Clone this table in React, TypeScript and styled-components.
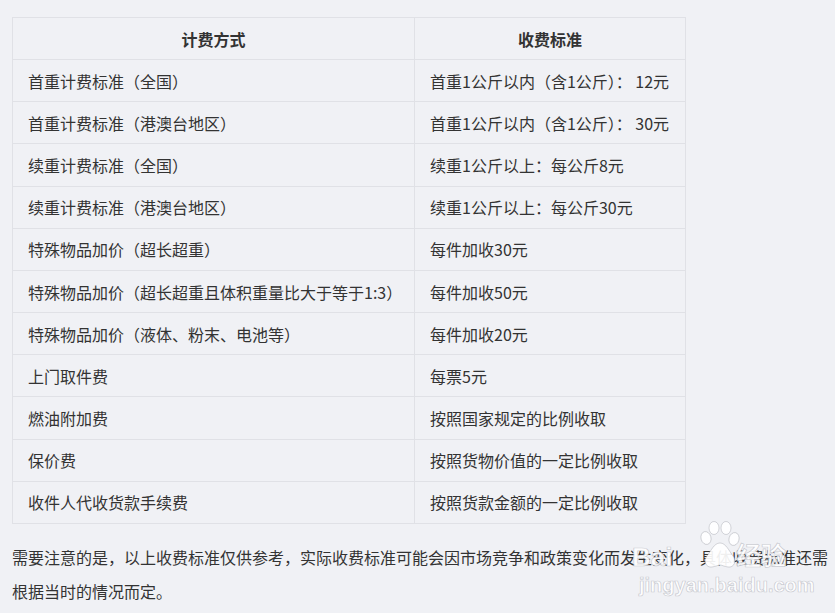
import React from "react";
import styled, { createGlobalStyle } from "styled-components";

const Global = createGlobalStyle`
  html, body { margin: 0; padding: 0; background: #f0f1f5; }
  body { font-family: "Noto Sans CJK SC", "Noto Sans", sans-serif; color: #333; }
`;

const Page = styled.div`
  position: relative;
  width: 835px;
  height: 613px;
  box-sizing: border-box;
  padding: 17px 7px 0 12px;
  overflow: hidden;
`;

const Table = styled.table`
  width: 673px;
  border-collapse: collapse;
  table-layout: fixed;
  font-size: 16px;
  color: #333;
`;

const Row = styled.tr`
  height: 42.17px;
`;

const Th = styled.th`
  border: 1px solid #e0e1e6;
  padding: 0 15px;
  font-weight: bold;
  text-align: center;
  line-height: 24px;
`;

const Td = styled.td`
  border: 1px solid #e0e1e6;
  padding: 0 15px;
  text-align: left;
  line-height: 24px;
  white-space: nowrap;
`;

const Note = styled.p`
  margin: 16px 0 0;
  font-size: 16px;
  line-height: 34px;
  color: #333;
`;

const Justified = styled.span`
  display: block;
  text-align: justify;
  text-align-last: justify;
`;

const Watermark = styled.div`
  position: absolute;
  left: 630px;
  top: 515px;
  width: 170px;
  height: 85px;
  pointer-events: none;
`;

const WmText = styled.span<{ $x: number; $y: number; $size: number; $cjk?: boolean }>`
  position: absolute;
  left: ${(p) => p.$x}px;
  top: ${(p) => p.$y}px;
  font-family: ${(p) => (p.$cjk ? '"Noto Sans CJK SC", sans-serif' : '"Liberation Sans", Arial, sans-serif')};
  font-weight: bold;
  font-size: ${(p) => p.$size}px;
  line-height: 1;
  white-space: nowrap;
  color: rgba(255, 255, 255, 0.92);
  -webkit-text-stroke: 0.7px rgba(160, 162, 172, 0.55);
`;

const Paw = styled.svg`
  position: absolute;
  left: 68px;
  top: 6px;
`;

const rows: [string, string][] = [
  ["首重计费标准（全国）", "首重1公斤以内（含1公斤）： 12元"],
  ["首重计费标准（港澳台地区）", "首重1公斤以内（含1公斤）： 30元"],
  ["续重计费标准（全国）", "续重1公斤以上：每公斤8元"],
  ["续重计费标准（港澳台地区）", "续重1公斤以上：每公斤30元"],
  ["特殊物品加价（超长超重）", "每件加收30元"],
  ["特殊物品加价（超长超重且体积重量比大于等于1:3）", "每件加收50元"],
  ["特殊物品加价（液体、粉末、电池等）", "每件加收20元"],
  ["上门取件费", "每票5元"],
  ["燃油附加费", "按照国家规定的比例收取"],
  ["保价费", "按照货物价值的一定比例收取"],
  ["收件人代收货款手续费", "按照货款金额的一定比例收取"],
];

export default function App() {
  return (
    <>
      <Global />
      <Page>
        <Table>
          <colgroup>
            <col style={{ width: 402 }} />
            <col style={{ width: 271 }} />
          </colgroup>
          <thead>
            <Row>
              <Th>计费方式</Th>
              <Th>收费标准</Th>
            </Row>
          </thead>
          <tbody>
            {rows.map(([a, b]) => (
              <Row key={a}>
                <Td>{a}</Td>
                <Td>{b}</Td>
              </Row>
            ))}
          </tbody>
        </Table>
        <Note>
          <Justified>
            需要注意的是，以上收费标准仅供参考，实际收费标准可能会因市场竞争和政策变化而发生变化，具体收费标准还需
          </Justified>
          根据当时的情况而定。
        </Note>
        <Watermark>
          <Paw width="44" height="48" viewBox="0 0 44 48">
            <g fill="rgba(255,255,255,0.92)" stroke="rgba(160,162,172,0.55)" strokeWidth="0.8">
              <ellipse cx="8" cy="17" rx="5" ry="6.5" transform="rotate(-15 8 17)" />
              <ellipse cx="16" cy="7" rx="5" ry="6.5" />
              <ellipse cx="28" cy="7" rx="5" ry="6.5" />
              <ellipse cx="36" cy="18" rx="5" ry="6.5" transform="rotate(15 36 18)" />
              <path d="M22 22 C16 22 13 30 9 35 C5 40 8 47 14 46 C18 45.5 20 44 22 44 C24 44 26 45.5 30 46 C36 47 39 40 35 35 C31 30 28 22 22 22 Z" />
            </g>
          </Paw>
          <WmText $x={2} $y={29} $size={26}>Bai</WmText>
          <WmText $x={106} $y={27} $size={25} $cjk>经验</WmText>
          <WmText $x={9} $y={60} $size={20}>jingyan.baidu.com</WmText>
        </Watermark>
      </Page>
    </>
  );
}
